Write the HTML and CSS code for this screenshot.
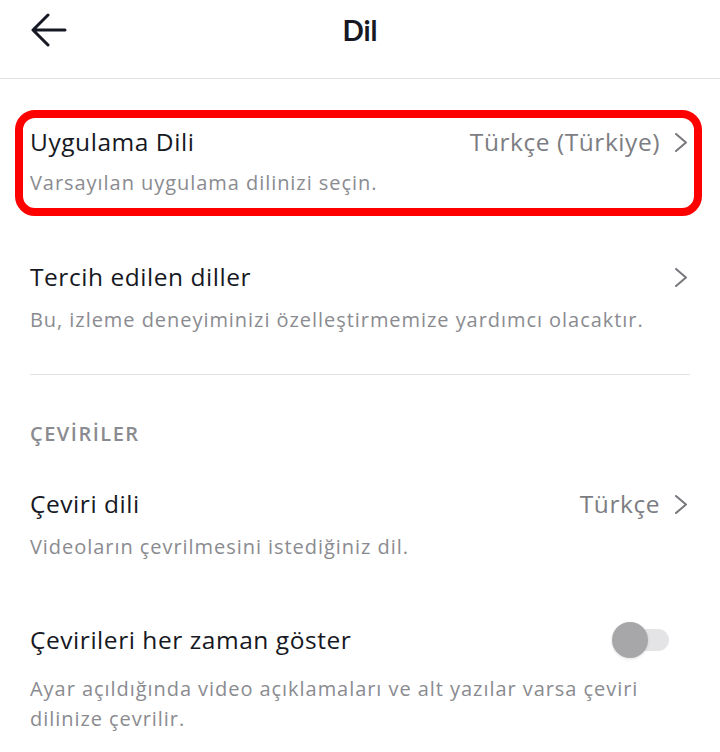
FILE: index.html
```html
<!DOCTYPE html>
<html lang="tr">
<head>
<meta charset="utf-8">
<title>Dil</title>
<link rel="stylesheet" href="styles.css">
</head>
<body>
<div class="page">
  <header class="header">
    <button class="back" aria-label="Geri">
      <svg width="36" height="36" viewBox="0 0 36 36" fill="none" stroke="#161823" stroke-width="3" stroke-linecap="round" stroke-linejoin="round">
        <path d="M34 17H3M17 2L2 17L17 32"/>
      </svg>
    </button>
    <h1 class="title">Dil</h1>
  </header>

  <div class="highlight">
    <div class="row row-first">
      <div class="row-main">
        <span class="row-title">Uygulama Dili</span>
        <span class="row-value">Türkçe (Türkiye)
          <svg class="chev" width="14" height="21" viewBox="0 0 14 21" fill="none" stroke="#76777c" stroke-width="2" stroke-linecap="round" stroke-linejoin="round"><path d="M2 2L12 10.5L2 19"/></svg>
        </span>
      </div>
      <div class="row-sub">Varsayılan uygulama dilinizi seçin.</div>
    </div>
  </div>

  <div class="row row-second">
    <div class="row-main">
      <span class="row-title">Tercih edilen diller</span>
      <span class="row-value">
        <svg class="chev" width="14" height="21" viewBox="0 0 14 21" fill="none" stroke="#76777c" stroke-width="2" stroke-linecap="round" stroke-linejoin="round"><path d="M2 2L12 10.5L2 19"/></svg>
      </span>
    </div>
    <div class="row-sub">Bu, izleme deneyiminizi özelleştirmemize yardımcı olacaktır.</div>
  </div>

  <div class="divider"></div>

  <div class="section-label">ÇEVİRİLER</div>

  <div class="row row-third">
    <div class="row-main">
      <span class="row-title">Çeviri dili</span>
      <span class="row-value">Türkçe
        <svg class="chev" width="14" height="21" viewBox="0 0 14 21" fill="none" stroke="#76777c" stroke-width="2" stroke-linecap="round" stroke-linejoin="round"><path d="M2 2L12 10.5L2 19"/></svg>
      </span>
    </div>
    <div class="row-sub">Videoların çevrilmesini istediğiniz dil.</div>
  </div>

  <div class="row row-fourth">
    <div class="row-main">
      <span class="row-title">Çevirileri her zaman göster</span>
      <span class="toggle" role="switch" aria-checked="false"><span class="knob"></span></span>
    </div>
    <div class="row-sub">Ayar açıldığında video açıklamaları ve alt yazılar varsa çeviri dilinize çevrilir.</div>
  </div>
</div>
</body>
</html>
```

FILE: styles.css
```css
* { box-sizing: border-box; }
html, body { margin: 0; padding: 0; background: #fff; }
body {
  font-family: "Open Sans", "Noto Sans", sans-serif;
  color: #161823;
  width: 720px;
  overflow: hidden;
}
.page { width: 720px; }

.header {
  height: 79px;
  border-bottom: 1px solid #e3e3e5;
  display: flex;
  align-items: center;
  justify-content: center;
  position: relative;
}
.back {
  position: absolute;
  left: 31px;
  top: 13px;
  border: 0;
  background: none;
  padding: 0;
  width: 36px;
  height: 36px;
  display: flex;
}
.title {
  margin: 0;
  font-family: "Lato", "Open Sans", sans-serif;
  font-size: 28px;
  font-weight: 700;
  line-height: 34px;
  margin-top: -18px;
}

.highlight {
  margin: 31px 18px 0 15px;
  border: 8px solid #ff0000;
  border-radius: 20px;
  padding: 8px 6px 10px 7px;
}

.row { padding: 0 32px 0 30px; }
.highlight .row { padding: 0; }

.row-main {
  display: flex;
  align-items: center;
  justify-content: space-between;
  height: 32px;
}
.row-title {
  font-size: 24.5px;
  letter-spacing: 0.55px;
  line-height: 32px;
  color: #161823;
}
.row-value {
  display: flex;
  align-items: center;
  gap: 14px;
  font-size: 24.5px;
  letter-spacing: 0.55px;
  line-height: 32px;
  color: #7c7d82;
}
.chev { display: block; }
.row-sub {
  margin-top: 12px;
  font-size: 20px;
  letter-spacing: 0.95px;
  line-height: 30px;
  color: #8a8b90;
}
.row-first .row-sub { margin-top: 10px; }

.row-second { margin-top: 45px; }
.divider {
  margin: 39px 30px 0 30px;
  height: 1px;
  background: #e3e3e5;
}
.section-label {
  margin: 44px 30px 0 30px;
  font-size: 20px;
  letter-spacing: 1.5px;
  line-height: 30px;
  font-weight: 600;
  color: #8a8b90;
}
.row-third { margin-top: 39px; }
.row-fourth { margin-top: 62px; }
.row-fourth .row-sub { margin-top: 18px; }

.toggle {
  position: relative;
  width: 54px;
  height: 22px;
  border-radius: 11px;
  background: #e4e4e6;
  margin-right: 19px;
}
.knob {
  position: absolute;
  left: -3px;
  top: -7px;
  width: 36px;
  height: 36px;
  border-radius: 50%;
  background: #a7a7aa;
  box-shadow: 0 1px 3px rgba(0,0,0,0.12);
}
```
